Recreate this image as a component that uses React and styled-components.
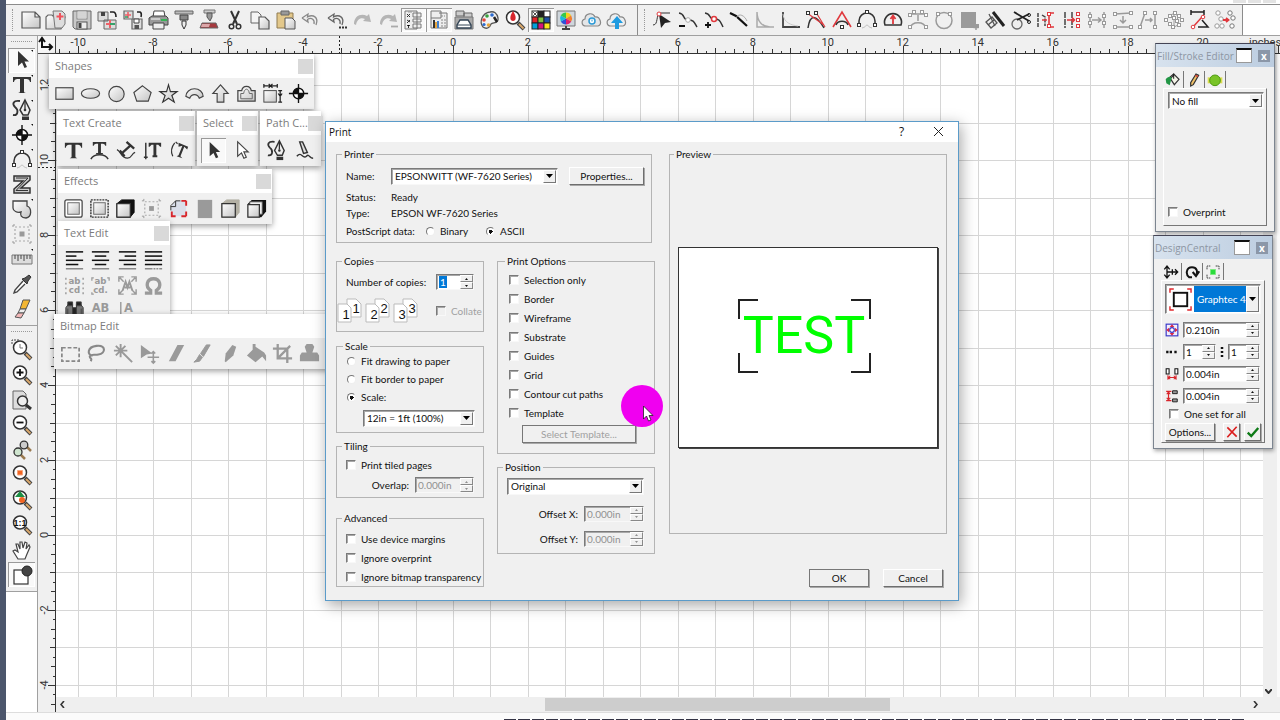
import React from "react";
import styled, { createGlobalStyle, css } from "styled-components";

/* ---------- icons, all drawn on a 24 x 24 box ---------- */

const K = "#333";
const G = "#9a9a9a";
const R = "#e0393e";

const cursor = "M8 3V18L12 14.500L14.500 20L17 19L14.500 13.500H19Z";

const lens = (inner) => (
  <>
    <path d="M15 15L21 21" stroke="#444" strokeWidth="4" />
    <path d="M16 16L20.500 20.500" stroke="#d9a86c" strokeWidth="2" />
    <circle cx="10" cy="9.500" r="6.500" fill="#fff" stroke="#333" strokeWidth="1.500" />
    {inner}
  </>
);

const lines = (rows, dash) => (
  <>
    {rows.map(([a, b], i) => (
      <path key={i} d={`M${a} ${3 + i * 4.4}H${b}`} stroke={i > 3 ? "#888" : "#111"} strokeWidth="1.600" strokeDasharray={dash && i === 4 ? "8 1 2 1 2 1" : undefined} />
    ))}
  </>
);

const node = (x, y, c = K) => <rect key={x + "-" + y} x={x - 1.5} y={y - 1.5} width="3" height="3" fill="#fff" stroke={c} />;

const pen = (
  <>
    <path d="M10 3C3 2 2 6 5 9C9 12 8 18 3 17" stroke={K} strokeWidth="1.800" fill="none" />
    <path d="M15 2L20 12L18 17H13L10 12Z" fill="#eee" stroke={K} strokeWidth="1.500" />
    <path d="M15 3V11" stroke={K} strokeWidth="1.300" />
    <circle cx="15" cy="12" r="1.300" fill={K} />
    <path d="M12 18.500H19V22H12Z" fill={K} />
  </>
);

const target = (
  <>
    <circle cx="12" cy="12" r="5.500" fill="#fff" stroke="#111" strokeWidth="1.500" />
    <path d="M12 12V6.500A5.500 5.500 0 0 0 6.500 12ZM12 12V17.500A5.500 5.500 0 0 0 17.500 12Z" fill="#111" />
    <path d="M12 2V22M2 12H22" stroke="#111" strokeWidth="1.400" />
  </>
);

const bigT = <path d="M3 4H21V9H20C19.500 6.500 18.500 6 14 6V18C14 19.500 14.500 19.500 16 20H8C9.500 19.500 10 19.500 10 18V6C5.500 6 4.500 6.500 4 9H3Z" fill={K} />;
const tee = "M5 3H19V7H18C17.500 5.500 17 5 13.500 5V14.500H15.500V16H8.500V14.500H10.500V5C7 5 6.500 5.500 6 7H5Z";

const arcNodes = (
  <>
    <path d="M4 17V13C4 8 8 5 12 5C16 5 20 8 20 13V17" stroke={K} strokeWidth="1.500" fill="none" />
    <path d="M7 20C11 19 11 17 12 17C13 17 13 19 17 20" stroke="#bbb" fill="none" />
    {node(12, 4)}
    {node(4, 17)}
    {node(20, 17)}
  </>
);

const floppy = (
  <>
    <path d="M3 3H21V21H5L3 19Z" fill="#c9c9c9" stroke="#666" />
    <rect x="7" y="3" width="10" height="8" fill="#fff" stroke="#888" />
    <path d="M8 5H16M8 7H16M8 9H16" stroke="#aaa" />
    <rect x="7" y="14" width="10" height="7" fill="#eee" stroke="#555" />
    <rect x="8.500" y="15" width="3" height="5" fill="#444" />
  </>
);

const undo = (c) => <path d="M3 10L9 6L8.500 9C14 6 20 9 17 17M3 10L9 14L8.500 11.500C12 9 16 11 15 16" stroke={c} strokeWidth="1.300" fill="none" />;
const redo = (c) => <path d="M21 14L19 6L17 8C11 5 4 8 4 16L6 17C7 11 11 9 15 11L13 13Z" fill={c} />;

const cluster = (c) => (
  <>
    <path d="M8 8L12 5L16 8L15 13L18 16L12 19L8 16L4 12ZM8 8L15 13M12 5L12 19" stroke={c} fill="none" />
    {[[8, 8], [13, 5], [17, 8], [20, 12], [15, 13], [17, 17], [11, 19], [8, 16], [4, 12], [12, 10]].map(([x, y]) => node(x, y, c))}
  </>
);

const dotted = (
  <>
    <rect x="5" y="5" width="14" height="14" fill="none" stroke="#aaa" strokeWidth="1.200" strokeDasharray="2 2" />
    <rect x="9.500" y="9.500" width="5" height="5" fill={G} />
    <path d="M2 4H4V2M20 2V4H22M2 20H4V22M20 22V20H22" stroke={G} fill="none" />
  </>
);

const cloud = "M6 18C1 18 1 12 5 11C5 5 13 4 15 9C20 8 23 17 18 18Z";

const block = (side) => (
  <>
    <path d="M3 7L8 3H21V16L17 21H3Z" fill={side} stroke={side} />
    <path d="M3 7H17V21H3Z" fill="url(#face)" stroke="#333" strokeWidth="1.300" />
  </>
);

const icons = {
  newDoc: <path d="M3 4H16L21 9V20H3ZM16 4V9H21" fill="url(#face)" stroke="#555" strokeWidth="1.200" />,
  open: (
    <>
      <path d="M2 9V21H17L21 9H10L8 7H4Z" fill="url(#face)" stroke="#666" strokeWidth="1.200" />
      <path d="M9 3H18L21 6V16L18 20H11Z" fill="#ddd" stroke="#777" />
      <path d="M16 5V12M12.500 8.500H19.500" stroke="#f0525c" strokeWidth="2" />
    </>
  ),
  save: floppy,
  importDoc: (
    <>
      <path d="M3 4H13V13H3ZM9 12H21V21H9Z" fill="#ddd" stroke="#666" />
      <path d="M6 4H10V8H6Z" fill="#444" />
      <path d="M15 4H18Q21 4 21 9" fill="none" stroke="#222" strokeWidth="1.600" />
      <path d="M15 12V20M11 16H19" stroke="#ee6068" strokeWidth="2" />
      <path d="M15 16H20" stroke="#38a169" strokeWidth="2" />
    </>
  ),
  exportDoc: (
    <>
      <path d="M3 3H12V11H3ZM11 11H21V21H11Z" fill="#ddd" stroke="#666" strokeWidth="1.200" />
      <path d="M13 11H18V15H13Z" fill="#fff" stroke="#444" />
      <path d="M13.500 17H18V21H13.500Z" fill="#555" />
      <path d="M16 4H19Q21 5 20 9" fill="none" stroke="#222" strokeWidth="1.600" />
      <path d="M7 4V10M4 7H10" stroke="#ee6068" strokeWidth="1.600" />
      <path d="M4 9H7" stroke="#38a169" strokeWidth="1.600" />
    </>
  ),
  print: (
    <>
      <path d="M8 3H18L19 9H7Z" fill="#fff" stroke="#444" />
      <path d="M3 10L6 8H20L22 10V17H3Z" fill="#999" stroke="#444" />
      <path d="M7 15H18V21H7Z" fill="#eee" stroke="#444" />
      <path d="M15 12H21" stroke="#35b455" strokeWidth="2" />
      <path d="M5 11H14" stroke="#ddd" strokeWidth="1.500" />
    </>
  ),
  cutter: (
    <>
      <path d="M3 3H21V6H3Z" fill="#bbb" stroke="#666" />
      <path d="M8 7H16V12H8Z" fill="#888" stroke="#444" />
      <path d="M10 13H14V17L12 21L10 17Z" fill="#eee" stroke="#333" />
    </>
  ),
  cutterRed: (
    <>
      <path d="M7 2H18V5H7Z" fill="#ccc" stroke="#777" />
      <path d="M10 5H15V9L13 13L10 9Z" fill="#999" stroke="#555" />
      <path d="M5 15H19L21 20H3Z" fill="#a63a3f" stroke="#666" />
      <path d="M5 16H13L12 19H4Z" fill="#dca6a8" />
    </>
  ),
  cut: (
    <>
      <path d="M8 3L14 16M16 3L10 16" stroke="#333" strokeWidth="2" />
      <circle cx="8.500" cy="18.500" r="2.300" fill="none" stroke="#333" strokeWidth="1.500" />
      <circle cx="15.500" cy="18.500" r="2.300" fill="none" stroke="#333" strokeWidth="1.500" />
    </>
  ),
  copy: (
    <>
      <path d="M3 4H10L13 7V15H3Z" fill="#f4f4f4" stroke="#666" />
      <path d="M11 9H17L21 13V21H11Z" fill="url(#face)" stroke="#555" strokeWidth="1.200" />
    </>
  ),
  paste: (
    <>
      <path d="M3 5H19V20H3Z" fill="#e3c88b" stroke="#8f7a50" />
      <path d="M7 3H15V7H7Z" fill="#999" stroke="#666" />
      <path d="M11 10H18L21 13V21H11Z" fill="url(#face)" stroke="#555" />
    </>
  ),
  undo: undo("#888"),
  undoMore: (
    <>
      {undo("#666")}
      <path d="M14 19.500H22" stroke="#333" strokeWidth="1.800" strokeDasharray="2 1" />
    </>
  ),
  redo: redo("#b5b5b5"),
  redoMore: (
    <>
      {redo("#b5b5b5")}
      <path d="M15 18.500H22" stroke="#aaa" strokeWidth="1.800" />
    </>
  ),
  listXY: (
    <>
      <path d="M4 3H16V21H4ZM12 5H20V9H12ZM12 11H20V14H12ZM12 16H20V20H12Z" fill="#eee" stroke="#777" />
      <path d="M6 6L9 9M9 6L6 9M6 12L9 14M9 12L6 15M6 17L7.500 18.500L9 17M7.500 18V20" stroke="#333" />
      <path d="M7 4H11" stroke="#999" />
    </>
  ),
  listColor: (
    <>
      <path d="M4 3H14V10H4ZM12 5H20V20H4V10" fill="#eee" stroke="#777" />
      <path d="M6 12H8V20H6Z" fill="#333" />
      <path d="M8 14H10V20H8Z" fill="#e7a53c" />
      <path d="M10 13H12V20H10Z" fill="#4080d0" />
      <path d="M14 12H19M14 15H19M14 18H19M14 8H18" stroke="#888" strokeDasharray="2 1" />
    </>
  ),
  tray: (
    <>
      <path d="M4 3H12V8H4ZM12 5H20V10H12Z" fill="#ccc" stroke="#666" />
      <path d="M3 9H21V21H3Z" fill="#aaa" stroke="#777" />
      <path d="M8 12H16L19 17V20H5V17Z" fill="#fff" stroke="#345" strokeWidth="1.400" />
      <path d="M5 17H19" stroke="#345" />
    </>
  ),
  palette: (
    <>
      <path d="M12 4C4 5 1 14 5 19C9 22 12 19 13 16C15 14 21 16 20 10C19 5 16 3 12 4Z" fill="#f2f2f2" stroke="#555" strokeWidth="1.300" />
      <circle cx="9" cy="8" r="1.800" fill="#38a13c" />
      <circle cx="14" cy="7" r="1.800" fill="#2c6bd0" />
      <circle cx="6" cy="12" r="1.800" fill="#e4473c" />
      <circle cx="6" cy="16.500" r="1.600" fill="#2c6bd0" />
      <circle cx="10.500" cy="17" r="1.800" fill="#e7a53c" />
      <path d="M16 9L19 14" stroke="#222" strokeWidth="2.500" />
    </>
  ),
  dropLens: lens(<path d="M10 3C6 9 7 13 10 13C13 13 14 9 10 3Z" fill="#d8262c" />),
  swatches: (
    <>
      {["#fff", "#222", "#fff", "#e02228", "#7cc242", "#1d4fa1", "#00a0d8", "#d4127c", "#f7e61c"].map((c, i) => (
        <rect key={i} x={3 + (i % 3) * 6} y={3 + Math.floor(i / 3) * 6} width="6" height="6" fill={c} stroke="#222" />
      ))}
      <path d="M3 3L9 9M9 3L3 9" stroke="#555" />
    </>
  ),
  monitor: (
    <>
      <path d="M3 3H21V18H3Z" fill="#cfd6dc" stroke="#777" />
      <path d="M8 21H16M12 18V21" stroke="#444" strokeWidth="2" />
      <path d="M12 10.500L12 4.500A6 6 0 0 1 17.200 7.500Z" fill="#f7d21c" />
      <path d="M12 10.500L17.200 7.500A6 6 0 0 1 17.200 13.500Z" fill="#f08030" />
      <path d="M12 10.500L17.200 13.500A6 6 0 0 1 12 16.500Z" fill="#e02070" />
      <path d="M12 10.500L12 16.500A6 6 0 0 1 6.800 13.500Z" fill="#3050d8" />
      <path d="M12 10.500L6.800 13.500A6 6 0 0 1 6.800 7.500Z" fill="#18b8e0" />
      <path d="M12 10.500L6.800 7.500A6 6 0 0 1 12 4.500Z" fill="#38c848" />
    </>
  ),
  cloud: (
    <>
      <path d={cloud} fill="#e4e6e8" stroke="#888" strokeWidth="1.200" />
      <circle cx="12" cy="13" r="3" fill="#fff" stroke="#2b9ad6" strokeWidth="1.500" />
      <path d="M12 11.500V13.500" stroke="#2b9ad6" />
    </>
  ),
  cloudUp: (
    <>
      <path d={cloud} fill="#eceef0" stroke="#888" strokeWidth="1.200" />
      <path d="M12 8L18 15H14V21H10V15H6Z" fill="#1f9be0" />
    </>
  ),
  nodeArrow: (
    <>
      <path d="M2 17C8 17 4 6 10 5H19" stroke={K} fill="none" />
      <path d="M8 6L20 14L14 15L10 20Z" fill="#222" />
      <circle cx="8" cy="6" r="2" fill="#fff" stroke={R} />
    </>
  ),
  nodeMinus: (
    <>
      <path d="M3 5C10 6 6 12 12 12C18 12 18 14 21 19" stroke={K} strokeWidth="1.500" fill="none" />
      <path d="M3 18H9" stroke="#111" strokeWidth="2" />
      <circle cx="12" cy="12" r="2.300" fill="#fff" stroke="#aaa" />
    </>
  ),
  nodePlus: (
    <>
      <path d="M3 5C10 6 6 11 12 11C18 11 18 13 21 19" stroke={K} strokeWidth="1.500" fill="none" />
      <path d="M3 17H9M6 14V20" stroke="#111" strokeWidth="1.800" />
      <circle cx="12" cy="11" r="2.500" fill="#fff" stroke={R} strokeWidth="1.500" />
    </>
  ),
  straighten: (
    <>
      <path d="M3 5L9 8L20 18" stroke="#111" strokeWidth="2.200" fill="none" />
      <path d="M9 10C12 4 18 8 20 13" stroke="#aaa" fill="none" />
    </>
  ),
  cornerSoft: <path d="M4 4V19H21M4 4C4 14 10 19 17 19" stroke="#aaa" strokeWidth="1.500" fill="none" />,
  cornerHard: (
    <>
      <path d="M4 4V19H21" stroke="#444" strokeWidth="1.800" fill="none" />
      <path d="M4 6C5 15 12 17 19 18" stroke="#ccc" fill="none" />
    </>
  ),
  smoothA: (
    <>
      <path d="M4 20C6 6 12 6 20 20" stroke={K} strokeWidth="1.500" fill="none" />
      <path d="M3 5L20 17M13 6L21 19" stroke={R} strokeWidth="1.200" />
      {node(4, 5)}
      {node(12, 5)}
    </>
  ),
  smoothB: (
    <>
      <path d="M3 19L12 4L21 19" stroke={R} strokeWidth="1.600" fill="none" />
      <path d="M6 17C8 12 16 12 18 17" stroke={K} strokeWidth="1.500" fill="none" />
      {node(12, 19)}
    </>
  ),
  arcNodes,
  arcUp: (
    <>
      <path d="M4 17A8.500 8.500 0 1 1 20 17ZM4 17H8M16 17H20" stroke={K} strokeWidth="1.600" fill="none" />
      <path d="M12 16V8M9.500 11L12 7.500L14.500 11" stroke={R} strokeWidth="1.800" fill="none" />
    </>
  ),
  arcDown: (
    <>
      <path d="M4 20C6 13 18 13 20 20M4 6H20M12 7V13" stroke={G} strokeWidth="1.500" fill="none" />
      {[[8, 4], [16, 4], [4, 7], [20, 7], [4, 19], [20, 19]].map(([x, y]) => node(x, y, G))}
    </>
  ),
  ring: (
    <>
      <circle cx="12" cy="12.500" r="8" fill="none" stroke={G} strokeWidth="1.500" />
      {node(6, 6, G)}
      {node(18, 6, G)}
    </>
  ),
  solid: (
    <>
      <path d="M3 4H18V16H21V20H3Z" fill={G} />
      <path d="M18 17V22M15.500 19.500H20.500" stroke={G} strokeWidth="1.500" />
    </>
  ),
  knife: (
    <>
      <path d="M3 14L9 9L14 15L8 20Z" fill="#eee" stroke="#555" strokeWidth="1.300" />
      <path d="M5 17L11 12M6 6L12 18" stroke="#555" strokeWidth="1.300" />
      <path d="M10 4L21 18" stroke="#222" strokeWidth="3" />
    </>
  ),
  scissorsCircle: (
    <>
      <circle cx="8" cy="16" r="5" fill="#eee" stroke="#666" strokeWidth="1.300" />
      <path d="M5 4L20 13M8 12L20 6" stroke="#222" strokeWidth="1.800" />
      <circle cx="20" cy="7" r="1.500" fill="none" stroke="#222" />
      <circle cx="20" cy="14" r="1.500" fill="none" stroke="#222" />
    </>
  ),
  joinLeft: (
    <>
      <path d="M4 5V19M8 7L11 9V18" stroke="#444" strokeWidth="1.500" strokeDasharray="4 1" fill="none" />
      <path d="M20 5H15V19H20M8 12H13" stroke={R} strokeWidth="1.600" fill="none" />
      {node(15, 6, R)}
      {node(15, 18, R)}
    </>
  ),
  joinRight: (
    <>
      <path d="M5 4V20M12 4V20" stroke="#444" strokeWidth="1.500" strokeDasharray="6 1" />
      <path d="M7 12H14M12 9.500L14.500 12L12 14.500" stroke={R} strokeWidth="1.500" fill="none" />
      {node(18, 6, R)}
      {node(18, 12, R)}
      {node(18, 18, R)}
    </>
  ),
  joinGray: (
    <>
      <path d="M5 4V20M19 4V20M7 12H16M13 9.500L16 12L13 14.500" stroke={G} strokeWidth="1.500" fill="none" />
      {node(5, 8, G)}
      {node(5, 15, G)}
      {node(19, 8, G)}
      {node(19, 15, G)}
    </>
  ),
  spreadV: (
    <>
      <path d="M4 6L20 5M4 19H20M12 8V15M9 12L12 15L15 12" stroke={G} strokeWidth="1.500" fill="none" />
      {[[4, 6], [20, 5], [4, 19], [20, 19]].map(([x, y]) => node(x, y, G))}
    </>
  ),
  spreadH: (
    <>
      <path d="M4 19L9 5M19 4V20M9 12H16M14 10L16 12L14 14" stroke={G} strokeWidth="1.500" fill="none" />
      {[[4, 19], [9, 5], [19, 5], [19, 19]].map(([x, y]) => node(x, y, G))}
    </>
  ),
  cluster: cluster(G),
  angle: (
    <>
      <path d="M3 4H16M3 2V7M16 2V7M14 12L20 19H10" stroke="#222" strokeWidth="1.500" fill="none" />
      <path d="M5 19L14 9" stroke={R} strokeWidth="1.500" />
      <circle cx="5" cy="19" r="1.800" fill="#fff" stroke={R} />
      <circle cx="15" cy="9" r="1.800" fill="#fff" stroke={R} />
    </>
  ),
  replace: (
    <>
      {[[5, 5], [8, 11], [9, 18], [4, 18], [17, 5], [20, 10], [19, 18]].map(([x, y]) => (
        <circle key={x + "-" + y} cx={x} cy={y} r="2.200" fill="#fff" stroke={x > 12 ? "#777" : G} />
      ))}
      <path d="M10 12H16M13 10L15.500 12L13 14" stroke={R} strokeWidth="1.800" fill="none" />
    </>
  ),
  select: <path d={cursor} fill="#333" />,
  selectOutline: <path d={cursor} fill="#fff" stroke="#444" strokeWidth="1.200" />,
  text: bigT,
  pen,
  target,
  zed: (
    <>
      <path d="M4 4H20V8L11 16H20V21H4V17L13 9H4Z" fill="#ccc" stroke={K} strokeWidth="1.500" />
      <path d="M6 6H18L6 18.500H18" stroke={K} fill="none" />
    </>
  ),
  blob: <path d="M3 4H17V9C22 11 22 20 16 21C11 21 10 18 11 15C7 16 3 14 3 11Z" fill="url(#face)" stroke="#444" strokeWidth="1.300" />,
  dotted,
  ruler: (
    <>
      <path d="M2 8H22V17H2Z" fill="#ddd" stroke="#777" />
      <path d="M5 8V12M8 8V14M11 8V12M14 8V14M17 8V12M20 8V12" stroke="#444" />
    </>
  ),
  dropper: (
    <>
      <path d="M13 9L5 18L4 21L7 20L15 12" fill="#fff" stroke="#444" strokeWidth="1.400" />
      <path d="M12 7L17 12L18 9L21 5L19 3L15 6Z" fill="#555" stroke="#333" />
    </>
  ),
  eraser: (
    <>
      <path d="M13 3H20L16 12H10Z" fill="#f2b632" stroke="#555" />
      <path d="M10 12H16L14 16H8Z" fill="#eee" stroke="#555" />
      <path d="M8 16H14L11 21L5 20Z" fill="#f3b8b8" stroke="#555" />
    </>
  ),
  zoomArea: lens(
    <>
      <path d="M2 6V2H9" stroke="#444" strokeDasharray="2 1" fill="none" />
      <path d="M10 6V10H13" stroke="#777" fill="none" />
    </>
  ),
  zoomIn: lens(<path d="M6.500 9.500H13.500M10 6V13" stroke="#111" strokeWidth="1.800" />),
  zoomPage: (
    <>
      <path d="M3 3H13L16 6V21H3Z" fill="#ddd" stroke="#666" />
      <path d="M16 17L21 21" stroke="#333" strokeWidth="3" />
      <circle cx="12.500" cy="13" r="5" fill="#eee" stroke="#333" strokeWidth="1.500" />
    </>
  ),
  zoomOut: lens(<path d="M6.500 9.500H13.500" stroke="#111" strokeWidth="1.800" />),
  zoomPair: (
    <>
      <path d="M16 8L21 13M10 16L15 21" stroke="#9a7a50" strokeWidth="2.500" />
      <circle cx="14" cy="7" r="3.800" fill="#ccc" stroke="#333" strokeWidth="1.300" />
      <circle cx="8" cy="14" r="4" fill="#cfe5cf" stroke="#333" strokeWidth="1.300" />
    </>
  ),
  zoomSel: lens(<path d="M7.500 7.500H12.500V12H7.500Z" fill="#f26522" stroke="#f7a57c" />),
  zoomArt: lens(
    <>
      <path d="M10 3L15 9H5Z" fill="#1e8f45" />
      <circle cx="12" cy="12" r="3" fill="#f26522" />
    </>
  ),
  zoomOne: lens(
    <text x="10" y="13" textAnchor="middle" fontFamily="Liberation Sans" fontWeight="bold" fontSize="9" fill="#111">
      1:1
    </text>
  ),
  hand: (
    <path d="M8 21L3 13L5 12L8 14L6 6L8 6L10 11L10 4L12 4L13 10L15 4L17 5L16 11L19 7L20 9L17 16L15 21Z" fill="#fff" stroke="#444" strokeWidth="1.200" />
  ),
  fillStroke: (
    <>
      <rect x="4" y="7" width="14" height="14" fill="#fff" stroke="#333" strokeWidth="1.200" />
      <circle cx="17" cy="8" r="5" fill="#444" stroke="#222" />
    </>
  ),
  rect: <rect x="3" y="6" width="18" height="12" fill="url(#face)" stroke="#444" strokeWidth="1.200" />,
  ellipse: <ellipse cx="12" cy="12" rx="9.500" ry="5" fill="url(#face)" stroke="#444" strokeWidth="1.200" />,
  circle: <circle cx="12" cy="12.500" r="8" fill="url(#face)" stroke="#444" strokeWidth="1.200" />,
  pentagon: <path d="M12 4L21 11L18 20H6L3 11Z" fill="url(#face)" stroke="#444" strokeWidth="1.200" />,
  star: <path d="M12 3L14 10H21L15.500 14L18 21L12 17L6 21L8.500 14L3 10H10Z" fill="url(#face)" stroke="#333" strokeWidth="1.200" />,
  arc: <path d="M3 15A9 8 0 0 1 21 15L17 17C15 12 9 12 7 17Z" fill="url(#face)" stroke="#444" strokeWidth="1.200" />,
  arrowUp: <path d="M12 3L20 12H15.500V21H8.500V12H4Z" fill="url(#face)" stroke="#444" strokeWidth="1.200" />,
  badge: (
    <>
      <path d="M3 20V9H7C8 3 16 3 17 9H21V20Z" fill="url(#face)" stroke="#444" strokeWidth="1.300" />
      <path d="M6 17.500V12H9C10 6 14 6 15 12H18V17.500Z" fill="none" stroke="#666" />
    </>
  ),
  dimension: (
    <>
      <rect x="3" y="9" width="13" height="12" fill="url(#face)" stroke="#444" />
      <path d="M3 4H17M3 2V6M17 2V6M8 2L12 6M12 2L8 6M20 9V21M18 9H22M18 21H22M18 12L20 15L22 12" stroke="#222" strokeWidth="1.300" fill="none" />
    </>
  ),
  textArc: (
    <>
      <path d={tee} fill={K} />
      <path d="M3 21C6 15 18 15 21 21" stroke={K} strokeWidth="1.500" fill="none" />
    </>
  ),
  textPath: (
    <>
      <path d="M12 3L20 10M16 7L7 15M5 12L10 18" stroke={K} strokeWidth="2.400" />
      <path d="M2 11C6 12 6 20 13 20C18 20 17 15 21 14" stroke={K} strokeWidth="1.300" fill="none" />
    </>
  ),
  textVert: (
    <>
      <path d="M8 4H21V8H20L18 6H16V17H17V19H12V17H13V6H11L9 8H8Z" fill={K} />
      <path d="M5 4V21M3 19H7" stroke={K} strokeWidth="1.500" />
    </>
  ),
  textSlant: (
    <>
      <path d="M11 4L21 8L20 11L17 8L13 18L15 20L9 18L11 17L15 7L11 8Z" fill={K} />
      <path d="M7 4C3 9 3 14 5 18M8 3L10 5" stroke={K} strokeWidth="1.300" fill="none" />
    </>
  ),
  brush: (
    <>
      <path d="M7 3L10 3L15 14L11 15Z" fill="#ddd" stroke={K} strokeWidth="1.500" />
      <path d="M4 18C9 12 10 22 14 18C17 15 17 20 21 20" stroke={K} strokeWidth="1.500" fill="none" />
    </>
  ),
  fxOutline: (
    <>
      <rect x="3" y="3" width="18" height="18" rx="2" fill="#fff" stroke="#444" strokeWidth="1.300" />
      <rect x="6" y="6" width="12" height="12" fill="url(#face)" stroke="#666" />
    </>
  ),
  fxDash: (
    <>
      <rect x="3" y="3" width="18" height="18" fill="none" stroke="#333" strokeWidth="1.500" strokeDasharray="2 1" />
      <rect x="6" y="6" width="12" height="12" fill="url(#face)" stroke="#666" />
    </>
  ),
  fxBlock: block("#111"),
  fxCrop: (
    <>
      <path d="M4 10L9 4H20V20H4Z" fill="#dadfea" />
      <path d="M5 20V15M4 20H9M20 20H15M20 20V15M20 4V9M20 4H15" stroke="#d8262c" strokeWidth="2" />
      <path d="M4 14V9L9 4H14M4 10H9V4" stroke="#333" fill="none" />
    </>
  ),
  fxSolid: <rect x="5" y="3" width="15" height="19" fill="#9a9a9a" />,
  fxBlockLight: block("#b3b0a4"),
  fxStack: (
    <>
      <path d="M7 3H22V15L17 21H3V7Z" fill="#111" />
      <path d="M5 5H18V18H5Z" fill="#eee" stroke="#555" />
      <path d="M3 8H15V21H3Z" fill="url(#face)" stroke="#333" strokeWidth="1.300" />
    </>
  ),
  alignLeft: lines([[3, 21], [3, 14], [3, 21], [3, 16], [3, 21]]),
  alignCenter: lines([[3, 21], [6, 18], [3, 21], [6, 18], [3, 21]]),
  alignRight: lines([[3, 21], [9, 21], [3, 21], [8, 21], [3, 21]]),
  alignFull: lines([[3, 21], [3, 21], [3, 21], [3, 21], [3, 21]], true),
  abcd: (
    <>
      <text x="12" y="10" textAnchor="middle" fontFamily="DejaVu Sans" fontWeight="bold" fontSize="9" fill={G}>ab</text>
      <text x="12" y="20" textAnchor="middle" fontFamily="DejaVu Sans" fontWeight="bold" fontSize="9" fill={G}>cd</text>
      <path d="M3 4V21M21 4V21" stroke={G} strokeWidth="1.500" strokeDasharray="2 3" />
    </>
  ),
  abcdCorner: (
    <>
      <text x="12" y="10" textAnchor="middle" fontFamily="DejaVu Sans" fontWeight="bold" fontSize="9" fill={G}>ab</text>
      <text x="12" y="20" textAnchor="middle" fontFamily="DejaVu Sans" fontWeight="bold" fontSize="9" fill={G}>cd.</text>
      <path d="M3 7V4H5M21 7V4H19M3 19V21H5" stroke={G} strokeWidth="1.300" fill="none" />
    </>
  ),
  textFit: (
    <>
      <path d="M4 4L8 8M20 4L16 8M4 20L8 16M20 20L16 16M3 8V3H8M16 3H21V8M3 16V21H8M16 21H21V16" stroke={G} strokeWidth="1.500" fill="none" />
      <path d="M7 17L10 8L12 14L14 8L17 17M9 14H15" stroke={G} strokeWidth="2" fill="none" />
    </>
  ),
  omega: (
    <path d="M3 20H9V17C3 13 5 5 12 5C19 5 21 13 15 17V20H21" stroke={G} strokeWidth="3.500" fill="none" />
  ),
  binoculars: (
    <>
      <path d="M3 21V9L6 5H10V21ZM14 21V5H18L21 9V21Z" fill="#777" stroke="#333" />
      <path d="M5 3H10V7H5ZM14 3H19V7H14ZM10 9H14V16H10ZM5 10V20M19 10V20" fill="#222" stroke="#444" />
    </>
  ),
  abUnder: (
    <>
      <text x="12" y="14" textAnchor="middle" fontFamily="DejaVu Sans" fontWeight="bold" fontSize="12" fill={G}>AB</text>
      <path d="M4 18H20" stroke={G} strokeWidth="1.500" />
    </>
  ),
  aBar: (
    <>
      <path d="M5 3V22" stroke={G} strokeWidth="1.500" />
      <text x="13" y="14" textAnchor="middle" fontFamily="DejaVu Sans" fontWeight="bold" fontSize="12" fill={G}>A</text>
    </>
  ),
  marquee: <rect x="3" y="6" width="18" height="14" fill="none" stroke="#888" strokeWidth="1.800" strokeDasharray="4 2" />,
  lasso: <path d="M8 14C2 14 2 5 12 4C22 3 22 12 14 13C10 14 7 12 5 15C5 18 8 16 6 20" stroke="#888" strokeWidth="2.200" fill="none" />,
  wand: <path d="M9 2V16M2 9H16M4 4L14 14M14 4L4 14M12 12L21 21" stroke="#999" strokeWidth="2" />,
  moveSel: (
    <>
      <path d="M3 3L15 12L9 13L3 17Z" fill="#999" />
      <path d="M16 10V22M10 16H22M14 12L16 10L18 12M14 20L16 22L18 20" stroke="#999" strokeWidth="1.600" fill="none" />
    </>
  ),
  erase: <path d="M13 3H20L11 20H4Z" fill="#9a9a9a" />,
  paint: <path d="M20 3H16L10 12L13 15ZM9 13L12 16L9 20L3 21L6 18Z" fill="#9a9a9a" stroke="#9a9a9a" />,
  pencil: <path d="M15 3L19 5L16 14L8 21L7 20L8 12Z" fill="#9a9a9a" />,
  bucket: <path d="M8 2H11V5L20 11L22 14V20L18 15L11 21L2 14L8 8Z" fill="#9a9a9a" />,
  crop: <path d="M7 2V17H22M2 7H17V22M8 16L20 4" stroke="#9a9a9a" strokeWidth="2.400" fill="none" />,
  stamp: <path d="M9 2H15L17 5L15 11H20L22 14V20H2V14L4 11H9L7 5Z" fill="#9a9a9a" />,
  sparkle: <path d="M12 4V20M4 12H20M6 6L18 18M18 6L6 18" stroke="#999" strokeWidth="1.800" />,
  paintFill: (
    <>
      <path d="M8 10L14 4L21 11L14 19Z" fill="#f4f4e8" stroke="#333" strokeWidth="1.800" />
      <path d="M13 2V10M7 8L13 3" stroke="#222" strokeWidth="1.600" fill="none" />
      <path d="M1 11C4 6 9 6 10 9L7 20L2 17Z" fill="#229645" />
    </>
  ),
  pencilColor: (
    <>
      <path d="M15 3L19 5L11 19L7 21L7 16Z" fill="#f0c168" stroke="#333" strokeWidth="1.800" />
      <path d="M14 5L18 7" stroke="#c33" strokeWidth="2" />
    </>
  ),
  greenDot: (
    <>
      <path d="M1 8H23V17H1Z" fill="#dcdc50" />
      <circle cx="12" cy="12.500" r="8" fill="#79c428" stroke="#4d9a10" strokeWidth="1.500" />
    </>
  ),
  sizeTab: <path d="M6 3V21M2 8L6 3L10 8M2 16L6 21L10 16M6 12H22M18 8L22 12L18 16M14 8V16" stroke="#111" strokeWidth="2" fill="none" />,
  rotateTab: <path d="M12 20H8C2 16 3 5 12 5C20 5 20 12 19 15M13 12L18 18L23 11" stroke="#111" strokeWidth="3" fill="none" />,
  markTab: (
    <>
      <path d="M3 8V3H8M16 3H21V8M3 16V21H8M16 21H21V16" stroke="#444" strokeWidth="1.500" strokeDasharray="3 1" fill="none" />
      <rect x="8" y="8" width="8" height="8" fill="#2bdc3c" stroke="#8e8" />
    </>
  ),
  markSquare: (
    <>
      <path d="M1 5V1H5M19 1H23V5M1 19V23H5M19 23H23V19" stroke="#e0282c" strokeWidth="1.500" fill="none" />
      <rect x="5" y="5" width="14" height="14" fill="#fff" stroke="#111" strokeWidth="2" />
    </>
  ),
  margin: (
    <>
      <rect x="2" y="2" width="20" height="20" fill="#f3eefc" stroke="#3838c8" strokeWidth="2" />
      <circle cx="12" cy="12" r="4" fill="#fff" stroke="#3838c8" strokeWidth="2" />
      <path d="M12 2L16 7H8ZM12 22L8 17H16ZM2 12L7 8V16ZM22 12L17 16V8Z" fill="#d82848" />
    </>
  ),
  dotsH: <path d="M2 12H13M16 12H22" stroke="#111" strokeWidth="4" strokeDasharray="4 2" />,
  dotsV: <path d="M12 2V22" stroke="#111" strokeWidth="5" strokeDasharray="4 4" />,
  gapH: (
    <>
      <path d="M2 3H7V12H2ZM17 3H22V12H17Z" fill="#fff" stroke="#111" strokeWidth="1.800" />
      <path d="M5 14V22M19 14V22M6 18H18M9 15L6 18L9 21M15 15L18 18L15 21" stroke="#d8262c" strokeWidth="1.800" fill="none" />
    </>
  ),
  gapV: (
    <>
      <path d="M13 3H21V8H13ZM13 17H21V22H13Z" fill="#999" stroke="#111" strokeWidth="1.500" />
      <path d="M2 4H11M2 20H11M6 5V19M3 9L6 5L9 9M3 15L6 19L9 15" stroke="#d8262c" strokeWidth="2" fill="none" />
    </>
  ),
  cross: <path d="M4 4L20 20M20 3L4 21" stroke="#dc1e1e" strokeWidth="2.800" />,
  tick: <path d="M3 13L9 19L21 5" stroke="#0d7a16" strokeWidth="4" fill="none" />,
};

const Icon = ({ name, size = 24 }) => (
  <Glyph viewBox="0 0 24 24" $size={size} aria-hidden="true">
    {icons[name]}
  </Glyph>
);

/* ---------- data ---------- */

const mainTools = [
  "newDoc", "open", "save", "importDoc", "exportDoc", "print", "cutter", "cutterRed", "cut", "copy", "paste", "undo",
  "undoMore", "redo", "redoMore", "listXY", "listColor", "tray", "palette", "dropLens", "swatches", "monitor", "cloud", "cloudUp",
];
const pathTools = [
  "nodeArrow", "nodeMinus", "nodePlus", "straighten", "cornerSoft", "cornerHard", "smoothA", "smoothB", "arcNodes", "arcUp", "arcDown", "ring",
  "solid", "knife", "scissorsCircle", "joinLeft", "joinRight", "joinGray", "spreadV", "spreadH", "cluster", "angle", "replace",
];
const drawTools = ["select", "text", "pen", "target", "arcNodes", "zed", "blob", "dotted", "ruler", "dropper", "eraser"];
const viewTools = ["zoomArea", "zoomIn", "zoomPage", "zoomOut", "zoomPair", "zoomSel", "zoomArt", "zoomOne", "hand", "fillStroke"];
const flyouts = ["select", "text", "pen", "target", "arcNodes", "blob", "ruler"];
const pressed = ["listXY", "listColor", "swatches", "fillStroke"];

const palettes = [
  { title: "Shapes", left: 49, top: 54, width: 265, tools: ["rect", "ellipse", "circle", "pentagon", "star", "arc", "arrowUp", "badge", "dimension", "target"] },
  { title: "Text Create", left: 57, top: 111, width: 138, tools: ["text", "textArc", "textPath", "textVert", "textSlant"] },
  { title: "Select", left: 197, top: 111, width: 61, tools: ["select", "selectOutline"], active: "select" },
  { title: "Path C...", left: 260, top: 111, width: 61, tools: ["pen", "brush"] },
  { title: "Effects", left: 58, top: 169, width: 214, tools: ["fxOutline", "fxDash", "fxBlock", "dotted", "fxCrop", "fxSolid", "fxBlockLight", "fxStack"] },
  {
    title: "Text Edit", left: 58, top: 221, width: 112,
    tools: ["alignLeft", "alignCenter", "alignRight", "alignFull", "abcd", "abcdCorner", "textFit", "omega", "binoculars", "abUnder", "aBar"],
  },
  {
    title: "Bitmap Edit", left: 54, top: 314, width: 298,
    tools: ["marquee", "lasso", "wand", "moveSel", "erase", "paint", "pencil", "bucket", "crop", "stamp", "sparkle"],
  },
];

const printOptions = ["Selection only", "Border", "Wireframe", "Substrate", "Guides", "Grid", "Contour cut paths", "Template"];
const advanced = ["Use device margins", "Ignore overprint", "Ignore bitmap transparency"];

/* ---------- rulers and sheet ---------- */

const UNIT = 37.48; // pixels in one inch of the sheet
const ZERO_X = 397; // inch 0, counted from the sheet's left edge
const ZERO_Y = 481; // inch 0, counted from the sheet's top edge

const inches = (from, to, step = 1) => {
  const out = [];
  for (let v = from; v <= to; v += step) out.push(v);
  return out;
};

const tickLength = (v) => (v % 2 === 0 ? 7 : v % 1 === 0 ? 5 : (v * 2) % 1 === 0 ? 4 : 2);

const Ruler = () => (
  <RulerTop aria-hidden="true">
    {inches(-10.5, 24, 0.25).map((v) => {
      const x = Math.round(ZERO_X + v * UNIT);
      return <path key={v} d={`M${x}.5 17V${17 - tickLength(v)}`} stroke="#333" />;
    })}
    {inches(-10, 20, 2).map((v) => (
      <text key={v} x={ZERO_X + v * UNIT} y="10" textAnchor="middle">
        {v}
      </text>
    ))}
    <path d="M283.500 0V17" stroke="#222" strokeDasharray="2 2" />
    <text x="1193" y="10">inches</text>
  </RulerTop>
);

const SideRuler = () => (
  <RulerSide aria-hidden="true">
    {inches(-6, 12.75, 0.25).map((v) => {
      const y = Math.round(ZERO_Y - v * UNIT);
      return <path key={v} d={`M17 ${y}.5H${17 - tickLength(v)}`} stroke="#333" />;
    })}
    {inches(-4, 12, 2).map((v) => (
      <text key={v} transform={`translate(10 ${Math.round(ZERO_Y - v * UNIT)}) rotate(-90)`} textAnchor="middle">
        {v}
      </text>
    ))}
    <path d="M0 113.500H17" stroke="#222" strokeDasharray="2 2" />
  </RulerSide>
);

const Grid = () => (
  <GridSvg aria-hidden="true">
    {inches(-10, 30).map((v) => (
      <path key={"x" + v} d={`M${Math.round(ZERO_X + v * UNIT)}.5 0V2000`} />
    ))}
    {inches(-30, 12).map((v) => (
      <path key={"y" + v} d={`M0 ${Math.round(ZERO_Y - v * UNIT)}.5H3000`} />
    ))}
  </GridSvg>
);

/* ---------- small controls ---------- */

const DropDown = ({ label, value, width }) => (
  <SelectBox $width={width}>
    <select aria-label={label} defaultValue={value}>
      <option>{value}</option>
    </select>
    <ArrowFace>
      <svg width="7" height="4" viewBox="0 0 7 4">
        <path d="M0 0H7L3.500 4Z" />
      </svg>
    </ArrowFace>
  </SelectBox>
);

const Spinner = ({ id, label, value, width, disabled, selected }) => (
  <SpinBox $width={width} $disabled={disabled} $selected={selected}>
    <input id={id} aria-label={label} defaultValue={value} disabled={disabled} size="1" />
    <SpinButtons>
      <button type="button" aria-label="Increase" disabled={disabled}>
        <svg width="3" height="2" viewBox="0 0 3 2"><path d="M0 2H3L1.500 0Z" /></svg>
      </button>
      <button type="button" aria-label="Decrease" disabled={disabled}>
        <svg width="3" height="2" viewBox="0 0 3 2"><path d="M0 0H3L1.500 2Z" /></svg>
      </button>
    </SpinButtons>
  </SpinBox>
);

const Check = ({ label, disabled }) => (
  <Option $disabled={disabled}>
    <Tick type="checkbox" disabled={disabled} />
    {label}
  </Option>
);

const Choice = ({ label, name, checked }) => (
  <Option>
    <Dot type="radio" name={name} defaultChecked={checked} />
    {label}
  </Option>
);

const Pages = () => (
  <PagesSvg width="84" height="26" viewBox="0 0 84 26">
    {[1, 2, 3].map((n, i) => (
      <g key={n} transform={`translate(${i * 28} 0)`}>
        <path d="M10 1H19L24 6V19H10Z" fill="#fff" stroke="#bbb" />
        <path d="M1 6H10L14 10V24H1Z" fill="#fff" stroke="#bbb" />
        <text x="19" y="15" textAnchor="middle">{n}</text>
        <text x="9" y="21" textAnchor="middle">{n}</text>
      </g>
    ))}
  </PagesSvg>
);

const ToolStrip = ({ tools, column, length }) => (
  <Strip $column={column} $length={length}>
    {tools.map((name) => (
      <Tool key={name} type="button" aria-label={name} $pressed={pressed.includes(name) || (column && name === "select")}>
        <Icon name={name} />
        {column && flyouts.includes(name) && <Flyout />}
      </Tool>
    ))}
  </Strip>
);

const Palette = ({ title, left, top, width, tools, active }) => (
  <PaletteBox $left={left} $top={top} $width={width}>
    <PaletteTitle>
      {title}
      <PaletteClose type="button" aria-label={"Close " + title} />
    </PaletteTitle>
    <PaletteTools>
      {tools.map((name) => (
        <Tool key={name} type="button" aria-label={name} $pressed={active === name}>
          <Icon name={name} size={23} />
        </Tool>
      ))}
    </PaletteTools>
  </PaletteBox>
);

const DockTitle = ({ title }) => (
  <DockBar>
    <span>{title}</span>
    <RollUp type="button" aria-label="Roll up" />
    <DockClose type="button" aria-label="Close">x</DockClose>
  </DockBar>
);

const Tabs = ({ names }) => (
  <TabRow>
    {names.map((name) => (
      <button key={name} type="button" aria-label={name}>
        <Icon name={name} size={16} />
      </button>
    ))}
  </TabRow>
);

/* ---------- windows ---------- */

const FillStroke = () => (
  <Dock $right={5} $top={43}>
    <DockTitle title="Fill/Stroke Editor" />
    <Tabs names={["paintFill", "pencilColor", "greenDot"]} />
    <DockBody $h={138}>
      <DropDown label="Fill" value="No fill" width={96} />
      <Push />
      <Check label="Overprint" />
    </DockBody>
  </Dock>
);

const DesignCentral = () => (
  <Dock $right={7} $top={235}>
    <DockTitle title="DesignCentral" />
    <Tabs names={["sizeTab", "rotateTab", "markTab"]} />
    <DockBody $tight>
      <MarkType>
        <MarkFace><Icon name="markSquare" size={23} /></MarkFace>
        <select aria-label="Mark type" defaultValue="Graphtec 4 P">
          <option>Graphtec 4 P</option>
        </select>
        <ArrowFace>
          <svg width="7" height="4" viewBox="0 0 7 4"><path d="M0 0H7L3.500 4Z" /></svg>
        </ArrowFace>
      </MarkType>
      <MarkRow>
        <Icon name="margin" size={14} />
        <Spinner label="Margin" value="0.210in" width={77} />
      </MarkRow>
      <MarkRow>
        <Icon name="dotsH" size={14} />
        <Spinner label="Columns" value="1" width={33} />
        <Icon name="dotsV" size={12} />
        <Spinner label="Rows" value="1" width={32} />
      </MarkRow>
      <MarkRow>
        <Icon name="gapH" size={14} />
        <Spinner label="Column gap" value="0.004in" width={77} />
      </MarkRow>
      <MarkRow>
        <Icon name="gapV" size={14} />
        <Spinner label="Row gap" value="0.004in" width={77} />
      </MarkRow>
      <CheckLine><Check label="One set for all" /></CheckLine>
      <Actions>
        <PushButton type="button" $width={50}>Options...</PushButton>
        <Push />
        <PushButton type="button" $width={17} aria-label="Cancel"><Icon name="cross" size={14} /></PushButton>
        <PushButton type="button" $width={17} aria-label="Apply"><Icon name="tick" size={14} /></PushButton>
      </Actions>
    </DockBody>
  </Dock>
);

const PrintDialog = () => (
  <Dialog role="dialog" aria-label="Print">
    <DialogTitle>
      <span>Print</span>
      <TitleButton type="button" aria-label="Help">?</TitleButton>
      <TitleButton type="button" aria-label="Close">
        <svg width="9" height="9" viewBox="0 0 9 9"><path d="M0 0L9 9M9 0L0 9" stroke="#222" /></svg>
      </TitleButton>
    </DialogTitle>
    <DialogBody>
      <Settings>
        <Group $pad="6px 7px 1px 9px" $printer>
          <legend>Printer</legend>
          <Row $h={20}>
            <Key>Name:</Key>
            <DropDown label="Printer name" value="EPSONWITT (WF-7620 Series)" width={167} />
            <Push />
            <PushButton type="button" $width={75}>Properties...</PushButton>
          </Row>
          <Info>
            <Row $h={16}><Key>Status:</Key>Ready</Row>
            <Row $h={16}><Key>Type:</Key>EPSON WF-7620 Series</Row>
          </Info>
          <Row $h={20}>
            <Key $wide>PostScript data:</Key>
            <Choices>
              <Choice name="data" label="Binary" />
              <Choice name="data" label="ASCII" checked />
            </Choices>
          </Row>
        </Group>
        <Columns>
          <Column $width={148}>
            <Group $pad="6px 9px 6px 9px">
              <legend>Copies</legend>
              <Row $h={18}>
                <label htmlFor="copies">Number of copies:</label>
                <Push />
                <Spinner id="copies" value="1" width={38} selected />
              </Row>
              <Collate>
                <Pages />
                <Check label="Collate" disabled />
              </Collate>
            </Group>
            <Group $pad="0 8px 2px 10px" $space={8}>
              <legend>Scale</legend>
              <Row $h={18}><Choice name="scale" label="Fit drawing to paper" /></Row>
              <Row $h={18}><Choice name="scale" label="Fit border to paper" /></Row>
              <Row $h={18}><Choice name="scale" label="Scale:" checked /></Row>
              <Row $h={24}>
                <Push />
                <DropDown label="Scale" value="12in = 1ft (100%)" width={112} />
              </Row>
            </Group>
            <Group $pad="3px 9px 2px 9px" $space={7}>
              <legend>Tiling</legend>
              <Row $h={20}><Check label="Print tiled pages" /></Row>
              <Row $h={20} $end>
                <label htmlFor="overlap">Overlap:</label>
                <Spinner id="overlap" value="0.000in" width={59} disabled />
              </Row>
            </Group>
            <Group $pad="5px 9px 0 9px" $space={14}>
              <legend>Advanced</legend>
              {advanced.map((label) => (
                <Row key={label} $h={19}><Check label={label} /></Row>
              ))}
            </Group>
          </Column>
          <Column $width={158}>
            <Group $pad="3px 18px 7px 11px">
              <legend>Print Options</legend>
              {printOptions.map((label) => (
                <Row key={label} $h={19}><Check label={label} /></Row>
              ))}
              <Row $h={24}>
                <Push />
                <PushButton type="button" $width={114} $strong disabled>Select Template...</PushButton>
              </Row>
            </Group>
            <Group $pad="2px 10px 2px 9px" $space={7}>
              <legend>Position</legend>
              <Row $h={22}>
                <DropDown label="Position" value="Original" width={137} />
              </Row>
              <Offsets>
                <Row $h={25} $end>
                  <label htmlFor="offx">Offset X:</label>
                  <Spinner id="offx" value="0.000in" width={60} disabled />
                </Row>
                <Row $h={25} $end>
                  <label htmlFor="offy">Offset Y:</label>
                  <Spinner id="offy" value="0.000in" width={60} disabled />
                </Row>
              </Offsets>
            </Group>
          </Column>
        </Columns>
      </Settings>
      <PreviewSide>
        <Group $pad="87px 8px 85px 8px">
          <legend>Preview</legend>
          <Paper>
            <Marked>
              <svg width="133" height="74" viewBox="0 0 133 74">
                <path d="M1 20V1H20M113 1H132V20M132 54V73H113M20 73H1V54" />
              </svg>
              <span>TEST</span>
            </Marked>
          </Paper>
        </Group>
        <Footer>
          <PushButton type="button" $width={60} $strong>OK</PushButton>
          <PushButton type="button" $width={60}>Cancel</PushButton>
        </Footer>
      </PreviewSide>
    </DialogBody>
  </Dialog>
);

export default function App() {
  return (
    <Screen>
      <GlobalStyle />
      <Defs aria-hidden="true">
        <linearGradient id="face" x1="0" y1="0" x2="1" y2="1">
          <stop offset="0" stopColor="#fff" />
          <stop offset="1" stopColor="#c4c4c4" />
        </linearGradient>
      </Defs>
      <DesktopEdge />
      <Window>
        <WindowTop><i /><i /><i /></WindowTop>
        <Toolbars>
          <Toolbar $width={632}>
            <Grip />
            <ToolStrip tools={mainTools} length={612} />
          </Toolbar>
          <Toolbar $width={605}>
            <Grip />
            <ToolStrip tools={pathTools} length={588} />
          </Toolbar>
        </Toolbars>
        <Work>
          <ToolColumn>
            <ToolDock>
              <GripTop />
              <ToolStrip tools={drawTools} column length={273} />
            </ToolDock>
            <ToolDock>
              <GripTop />
              <ToolStrip tools={viewTools} column length={249} />
            </ToolDock>
          </ToolColumn>
          <Corner>
            <svg width="16" height="16" viewBox="0 0 16 16">
              <path d="M4 3V11H14M1 6L4 2L7 6M11 8L14 11L11 14" stroke="#111" strokeWidth="2" fill="none" />
            </svg>
          </Corner>
          <Ruler />
          <SideRuler />
          <Sheet><Grid /></Sheet>
          <ScrollV>
            <svg width="7" height="5" viewBox="0 0 7 5"><path d="M0 0L3.500 4L7 0" stroke="#333" strokeWidth="2" fill="none" /></svg>
          </ScrollV>
          <ScrollH>
            <svg width="5" height="7" viewBox="0 0 5 7"><path d="M4 0L1 3.500L4 7" stroke="#333" strokeWidth="1.600" fill="none" /></svg>
            <Thumb />
            <svg width="5" height="7" viewBox="0 0 5 7"><path d="M1 0L4 3.500L1 7" stroke="#333" strokeWidth="1.600" fill="none" /></svg>
          </ScrollH>
        </Work>
        <Status><Swatches /></Status>
      </Window>
      {palettes.map((p) => (
        <Palette key={p.title} {...p} />
      ))}
      <FillStroke />
      <DesignCentral />
      <PrintDialog />
      <Pointer>
        <svg width="44" height="44" viewBox="0 0 44 44" aria-hidden="true">
          <circle cx="22" cy="21" r="21" fill="#f000f0" />
          <path d="M23.500 21V34L26.500 31L28.500 36L31 35L29 30.500H33Z" fill="#fff" stroke="#222" strokeWidth="0.800" />
        </svg>
      </Pointer>
    </Screen>
  );
}

/* ---------- styles ---------- */

const GlobalStyle = createGlobalStyle`
  * {
    box-sizing: border-box;
  }

  body {
    margin: 0;
    overflow: hidden;
    color: #111;
    font: 10px/12px Lato, "Liberation Sans", sans-serif;
  }

  button, input, select {
    margin: 0;
    padding: 0;
    border: 0;
    border-radius: 0;
    color: inherit;
    background: none;
    font: inherit;
  }
`;

const raised = css`
  border: 1px solid;
  border-color: #fff #6e6e6e #6e6e6e #fff;
  box-shadow: 1px 1px 0 #a8a8a8;
`;

const sunken = css`
  border: 1px solid;
  border-color: #7a7a7a #f8f8f8 #f8f8f8 #7a7a7a;
  box-shadow: inset 1px 1px 0 #a8a8a8;
`;

const titleFont = css`
  font-family: "Open Sans", sans-serif;
  white-space: nowrap;
`;

const Glyph = styled.svg`
  display: block;
  flex: none;
  width: ${(p) => p.$size}px;
  height: ${(p) => p.$size}px;
`;

const Defs = styled.svg`
  position: absolute;
  width: 0;
  height: 0;
`;

const Screen = styled.div`
  position: relative;
  display: flex;
  height: 100vh;
  overflow: hidden;
  background: #fff;
`;

const DesktopEdge = styled.div`
  flex: none;
  width: 6px;
  background: #4c566c;
`;

const Window = styled.div`
  display: flex;
  flex: 1;
  flex-direction: column;
  min-width: 0;
`;

const WindowTop = styled.div`
  display: flex;
  justify-content: flex-end;
  gap: 2px;
  height: 5px;
  padding-right: 4px;
  border-bottom: 1px solid #8c8c8c;

  i {
    width: 13px;
    height: 3px;
    background: #e3e3e3;
  }
`;

const Toolbars = styled.div`
  display: flex;
  height: 31px;
  border-bottom: 1px solid #a0a0a0;
`;

const Toolbar = styled.div`
  display: flex;
  align-items: center;
  width: ${(p) => p.$width}px;
  border-right: 1px solid #8c8c8c;
  background: #f0f0f0;
`;

const Grip = styled.span`
  width: 1px;
  height: 22px;
  margin: 0 5px 0 6px;
  border-left: 1px dotted #999;
`;

const Strip = styled.div`
  display: flex;
  flex-direction: ${(p) => (p.$column ? "column" : "row")};
  ${(p) => (p.$column ? "height" : "width")}: ${(p) => p.$length}px;
`;

const Tool = styled.button`
  position: relative;
  display: flex;
  flex: 1;
  align-items: center;
  justify-content: center;
  min-width: 0;
  min-height: 0;
  ${(p) =>
    p.$pressed &&
    css`
      background: #f9f9f9;
      box-shadow: inset 1px 1px 0 #999, inset -1px -1px 0 #fff;
    `}
`;

const Flyout = styled.span`
  position: absolute;
  top: 2px;
  right: 2px;
  border: 1px solid;
  border-color: #111 #111 transparent transparent;
`;

const Work = styled.div`
  display: grid;
  flex: 1;
  grid-template: 18px 1fr 15px / 32px 18px 1fr 17px;
  min-height: 0;
`;

const ToolColumn = styled.div`
  grid-row: 1 / 4;
  border-right: 1px solid #a0a0a0;
`;

const ToolDock = styled.div`
  padding: 5px 2px 4px;
  border-bottom: 1px solid #a0a0a0;
  background: #f0f0f0;
`;

const GripTop = styled.div`
  height: 7px;
  margin: 0 3px;
  border-top: 1px dotted #999;
`;

const Corner = styled.div`
  border-right: 1px solid #444;
  border-bottom: 1px solid #444;
  background: #f6f6f6;
`;

const rulerText = css`
  background: #f0f0f0;

  text {
    fill: #333;
    font: 11px Roboto, "Liberation Sans", sans-serif;
  }
`;

const RulerTop = styled.svg`
  grid-column: 3 / 5;
  width: 100%;
  height: 18px;
  border-bottom: 1px solid #333;
  ${rulerText}
`;

const RulerSide = styled.svg`
  grid-row: 2 / 4;
  grid-column: 2;
  width: 18px;
  height: 100%;
  border-right: 1px solid #333;
  ${rulerText}
`;

const Sheet = styled.div`
  min-width: 0;
  min-height: 0;
  overflow: hidden;
  background: #fff;
`;

const GridSvg = styled.svg`
  display: block;
  width: 100%;
  height: 100%;

  path {
    stroke: #d6d6d6;
  }
`;

const ScrollV = styled.div`
  display: flex;
  align-items: flex-end;
  justify-content: center;
  padding: 0 4px 3px 0;
  border-right: 3px solid #fafafa;
  background: #efefef;
`;

const ScrollH = styled.div`
  display: grid;
  grid-column: 3 / 5;
  grid-template-columns: 5px 480px minmax(0, 345px) 1fr 5px;
  align-items: center;
  padding: 0 22px 0 4px;
  background: #efefef;

  svg:last-child {
    grid-column: 5;
  }
`;

const Thumb = styled.div`
  grid-column: 3;
  height: 13px;
  background: #cdcdcd;
`;

const Status = styled.div`
  display: flex;
  align-items: flex-end;
  height: 8px;
  padding: 0 35px 0 498px;
  border-top: 1px solid #ddd;
  background: #fbfbfb;
`;

const Swatches = styled.div`
  flex: 1;
  height: 1px;
  background: repeating-linear-gradient(90deg, #334 0 12px, #fff 12px 14px);
`;

const PaletteBox = styled.section`
  position: absolute;
  left: ${(p) => p.$left}px;
  top: ${(p) => p.$top}px;
  width: ${(p) => p.$width}px;
  background: #f0f0f0;
  box-shadow: 0 2px 6px rgba(0, 0, 0, 0.4);
`;

const PaletteTitle = styled.header`
  display: flex;
  align-items: center;
  justify-content: space-between;
  height: 24px;
  padding: 0 1px 0 6px;
  color: #7c7c7c;
  background: #fff;
  font-size: 11px;
  ${titleFont}
`;

const PaletteClose = styled.button`
  flex: none;
  width: 15px;
  height: 15px;
  background: #d9d9d9;
`;

const PaletteTools = styled.div`
  display: grid;
  grid-template-columns: repeat(auto-fill, 25px);
  grid-auto-rows: 25px;
  justify-content: space-evenly;
  padding: 3px 2px;
`;

const Dock = styled.section`
  position: absolute;
  right: ${(p) => p.$right}px;
  top: ${(p) => p.$top}px;
  width: 120px;
  padding: 0 7px 5px;
  border: 1px solid #7c8590;
  border-top-color: #445;
  background: #f0f0f0;
  box-shadow: 1px 2px 4px rgba(0, 0, 0, 0.35);
`;

const DockBar = styled.header`
  display: flex;
  align-items: center;
  gap: 6px;
  height: 23px;
  margin: 0 -7px;
  padding: 0 4px 0 1px;
  color: #8d96a3;
  background: linear-gradient(90deg, #d7e2ee, #bccde0);
  ${titleFont}

  span {
    flex: 1;
    min-width: 0;
  }
`;

const RollUp = styled.button`
  flex: none;
  width: 16px;
  height: 15px;
  border: 1px solid #999;
  border-top: 2px solid #111;
  background: #fff;
`;

const DockClose = styled.button`
  flex: none;
  width: 12px;
  height: 12px;
  color: #fff;
  background: #8b97a8;
  font-weight: bold;
  line-height: 10px;
`;

const TabRow = styled.div`
  display: flex;
  height: 17px;
  margin-top: 4px;

  button {
    display: flex;
    align-items: center;
    width: 21px;
    padding-left: 2px;
    border-right: 1px solid #777;
  }
`;

const DockBody = styled.div`
  display: flex;
  flex-direction: column;
  gap: ${(p) => (p.$tight ? 3 : 0)}px;
  height: ${(p) => (p.$h ? p.$h + "px" : "auto")};
  padding: ${(p) => (p.$tight ? "3px 3px 1px 3px" : "3px 3px 7px 4px")};
  border: 1px solid;
  border-color: #fff #777 #777 #fff;
`;

const MarkType = styled.div`
  display: flex;
  height: 30px;
  margin-bottom: 3px;
  padding: 1px;
  ${sunken}
  background: #fff;

  select {
    flex: 1;
    min-width: 0;
    padding-left: 3px;
    color: #fff;
    background: #0078d7;
    appearance: none;
  }

  > span:last-child {
    position: static;
    height: auto;
  }
`;

const MarkFace = styled.div`
  display: flex;
  align-items: center;
  padding: 0 2px;
`;

const MarkRow = styled.div`
  display: flex;
  align-items: center;
  gap: 4px;
  height: 19px;

  > svg:nth-child(3) {
    margin: 0 -4px;
  }
`;

const CheckLine = styled.div`
  padding-left: 4px;
`;

const Actions = styled.div`
  display: flex;
  gap: 4px;
`;

const Dialog = styled.section`
  position: absolute;
  left: 325px;
  top: 121px;
  border: 1px solid #5b9bc9;
  background: #f0f0f0;
  box-shadow: 2px 4px 14px rgba(0, 0, 0, 0.35);
`;

const DialogTitle = styled.header`
  display: flex;
  align-items: center;
  height: 20px;
  padding: 0 1px 0 3px;
  background: #fff;
  ${titleFont}

  span {
    flex: 1;
  }
`;

const TitleButton = styled.button`
  width: 37px;
  height: 20px;
  font-size: 12px;
`;

const DialogBody = styled.div`
  display: flex;
  gap: 14px;
  padding: 6px 11px 13px 10px;
`;

const Settings = styled.div`
  width: 319px;
`;

const Columns = styled.div`
  display: flex;
  gap: 13px;
  margin-top: 12px;
`;

const Column = styled.div`
  width: ${(p) => p.$width}px;
`;

const Group = styled.fieldset`
  min-width: 0;
  margin: ${(p) => p.$space || 0}px ${(p) => (p.$printer ? 3 : 0)}px 0 0;
  padding: ${(p) => p.$pad};
  border: 1px solid #b4b4b4;

  legend {
    margin-left: -4px;
    padding: 0 2px;
    line-height: 12px;
  }
`;

const Row = styled.div`
  display: flex;
  align-items: center;
  justify-content: ${(p) => (p.$end ? "flex-end" : "flex-start")};
  gap: ${(p) => (p.$end ? 6 : 0)}px;
  height: ${(p) => p.$h}px;
  white-space: nowrap;
`;

const Info = styled.div`
  margin-top: 3px;
`;

const Key = styled.span`
  width: ${(p) => (p.$wide ? 80 : 45)}px;
`;

const Choices = styled.div`
  display: flex;
  gap: 18px;
`;

const Push = styled.span`
  flex: 1;
`;

const Option = styled.label`
  display: flex;
  align-items: center;
  gap: 5px;
  color: ${(p) => (p.$disabled ? "#a0a0a0" : "inherit")};
  white-space: nowrap;
`;

const Tick = styled.input`
  flex: none;
  width: 10px;
  height: 10px;
  appearance: none;
  ${sunken}
  background: ${(p) => (p.disabled ? "#f0f0f0" : "#fff")};
`;

const Dot = styled.input`
  flex: none;
  width: 9px;
  height: 9px;
  border: 1px solid;
  border-color: #777 #eee #eee #777;
  border-radius: 50%;
  background: #fff;
  appearance: none;

  &:checked {
    background: radial-gradient(circle, #111 0 2px, #fff 2px);
  }
`;

const SelectBox = styled.div`
  position: relative;
  width: ${(p) => p.$width}px;
  height: 17px;
  ${sunken}
  background: #fff;

  select {
    width: 100%;
    height: 15px;
    padding-left: 3px;
    appearance: none;
  }
`;

const ArrowFace = styled.span`
  position: absolute;
  top: 1px;
  right: 1px;
  display: flex;
  align-items: center;
  justify-content: center;
  width: 13px;
  height: 13px;
  border: 1px solid;
  border-color: #fff #777 #777 #fff;
  background: #f0f0f0;
  pointer-events: none;
`;

const SpinBox = styled.div`
  display: flex;
  width: ${(p) => p.$width}px;
  height: 16px;
  ${sunken}
  color: ${(p) => (p.$disabled ? "#909090" : "inherit")};
  background: ${(p) => (p.$disabled ? "#f0f0f0" : "#fff")};

  input {
    flex: 1;
    min-width: 0;
    padding-left: 2px;
    ${(p) =>
      p.$selected &&
      css`
        flex: none;
        width: 8px;
        margin: 1px auto 1px 2px;
        padding-left: 1px;
        color: #fff;
        background: #0078d7;
      `}
  }
`;

const SpinButtons = styled.div`
  display: flex;
  flex-direction: column;
  width: 13px;

  button {
    display: flex;
    flex: 1;
    align-items: center;
    justify-content: center;
    border: 1px solid;
    border-color: #fff #888 #888 #fff;
    background: #f0f0f0;
  }

  path {
    fill: currentColor;
  }
`;

const PushButton = styled.button`
  display: flex;
  align-items: center;
  justify-content: center;
  width: ${(p) => p.$width}px;
  height: 18px;
  ${raised}
  border-color: ${(p) => (p.$strong ? "#777" : "#fff #6e6e6e #6e6e6e #fff")};
  background: #f0f0f0;
  white-space: nowrap;

  &:disabled {
    color: #a0a0a0;
  }
`;

const Collate = styled.div`
  display: flex;
  align-items: center;
  gap: 15px;
  height: 28px;
  margin: 6px 0 0 -9px;
`;

const PagesSvg = styled.svg`
  flex: none;

  text {
    fill: #111;
    font: 13px "Liberation Sans", sans-serif;
  }
`;

const Offsets = styled.div`
  margin-top: 4px;
`;

const PreviewSide = styled.div`
  width: 278px;
`;

const Paper = styled.div`
  display: flex;
  justify-content: center;
  height: 201px;
  padding: 51px 8px 0 0;
  border: 1px solid #333;
  background: #fff;
  box-shadow: 1px 1px 0 #444;
`;

const Marked = styled.div`
  display: grid;
  place-items: center;
  height: 74px;

  > * {
    grid-area: 1 / 1;
  }

  path {
    fill: none;
    stroke: #222;
    stroke-width: 2;
  }

  span {
    color: #00ff00;
    font: 52px/74px Roboto, "Liberation Sans", sans-serif;
  }
`;

const Footer = styled.div`
  display: flex;
  justify-content: flex-end;
  gap: 14px;
  margin-top: 35px;
  padding-right: 4px;
`;

const Pointer = styled.div`
  position: absolute;
  left: 620px;
  top: 385px;
  pointer-events: none;
`;
